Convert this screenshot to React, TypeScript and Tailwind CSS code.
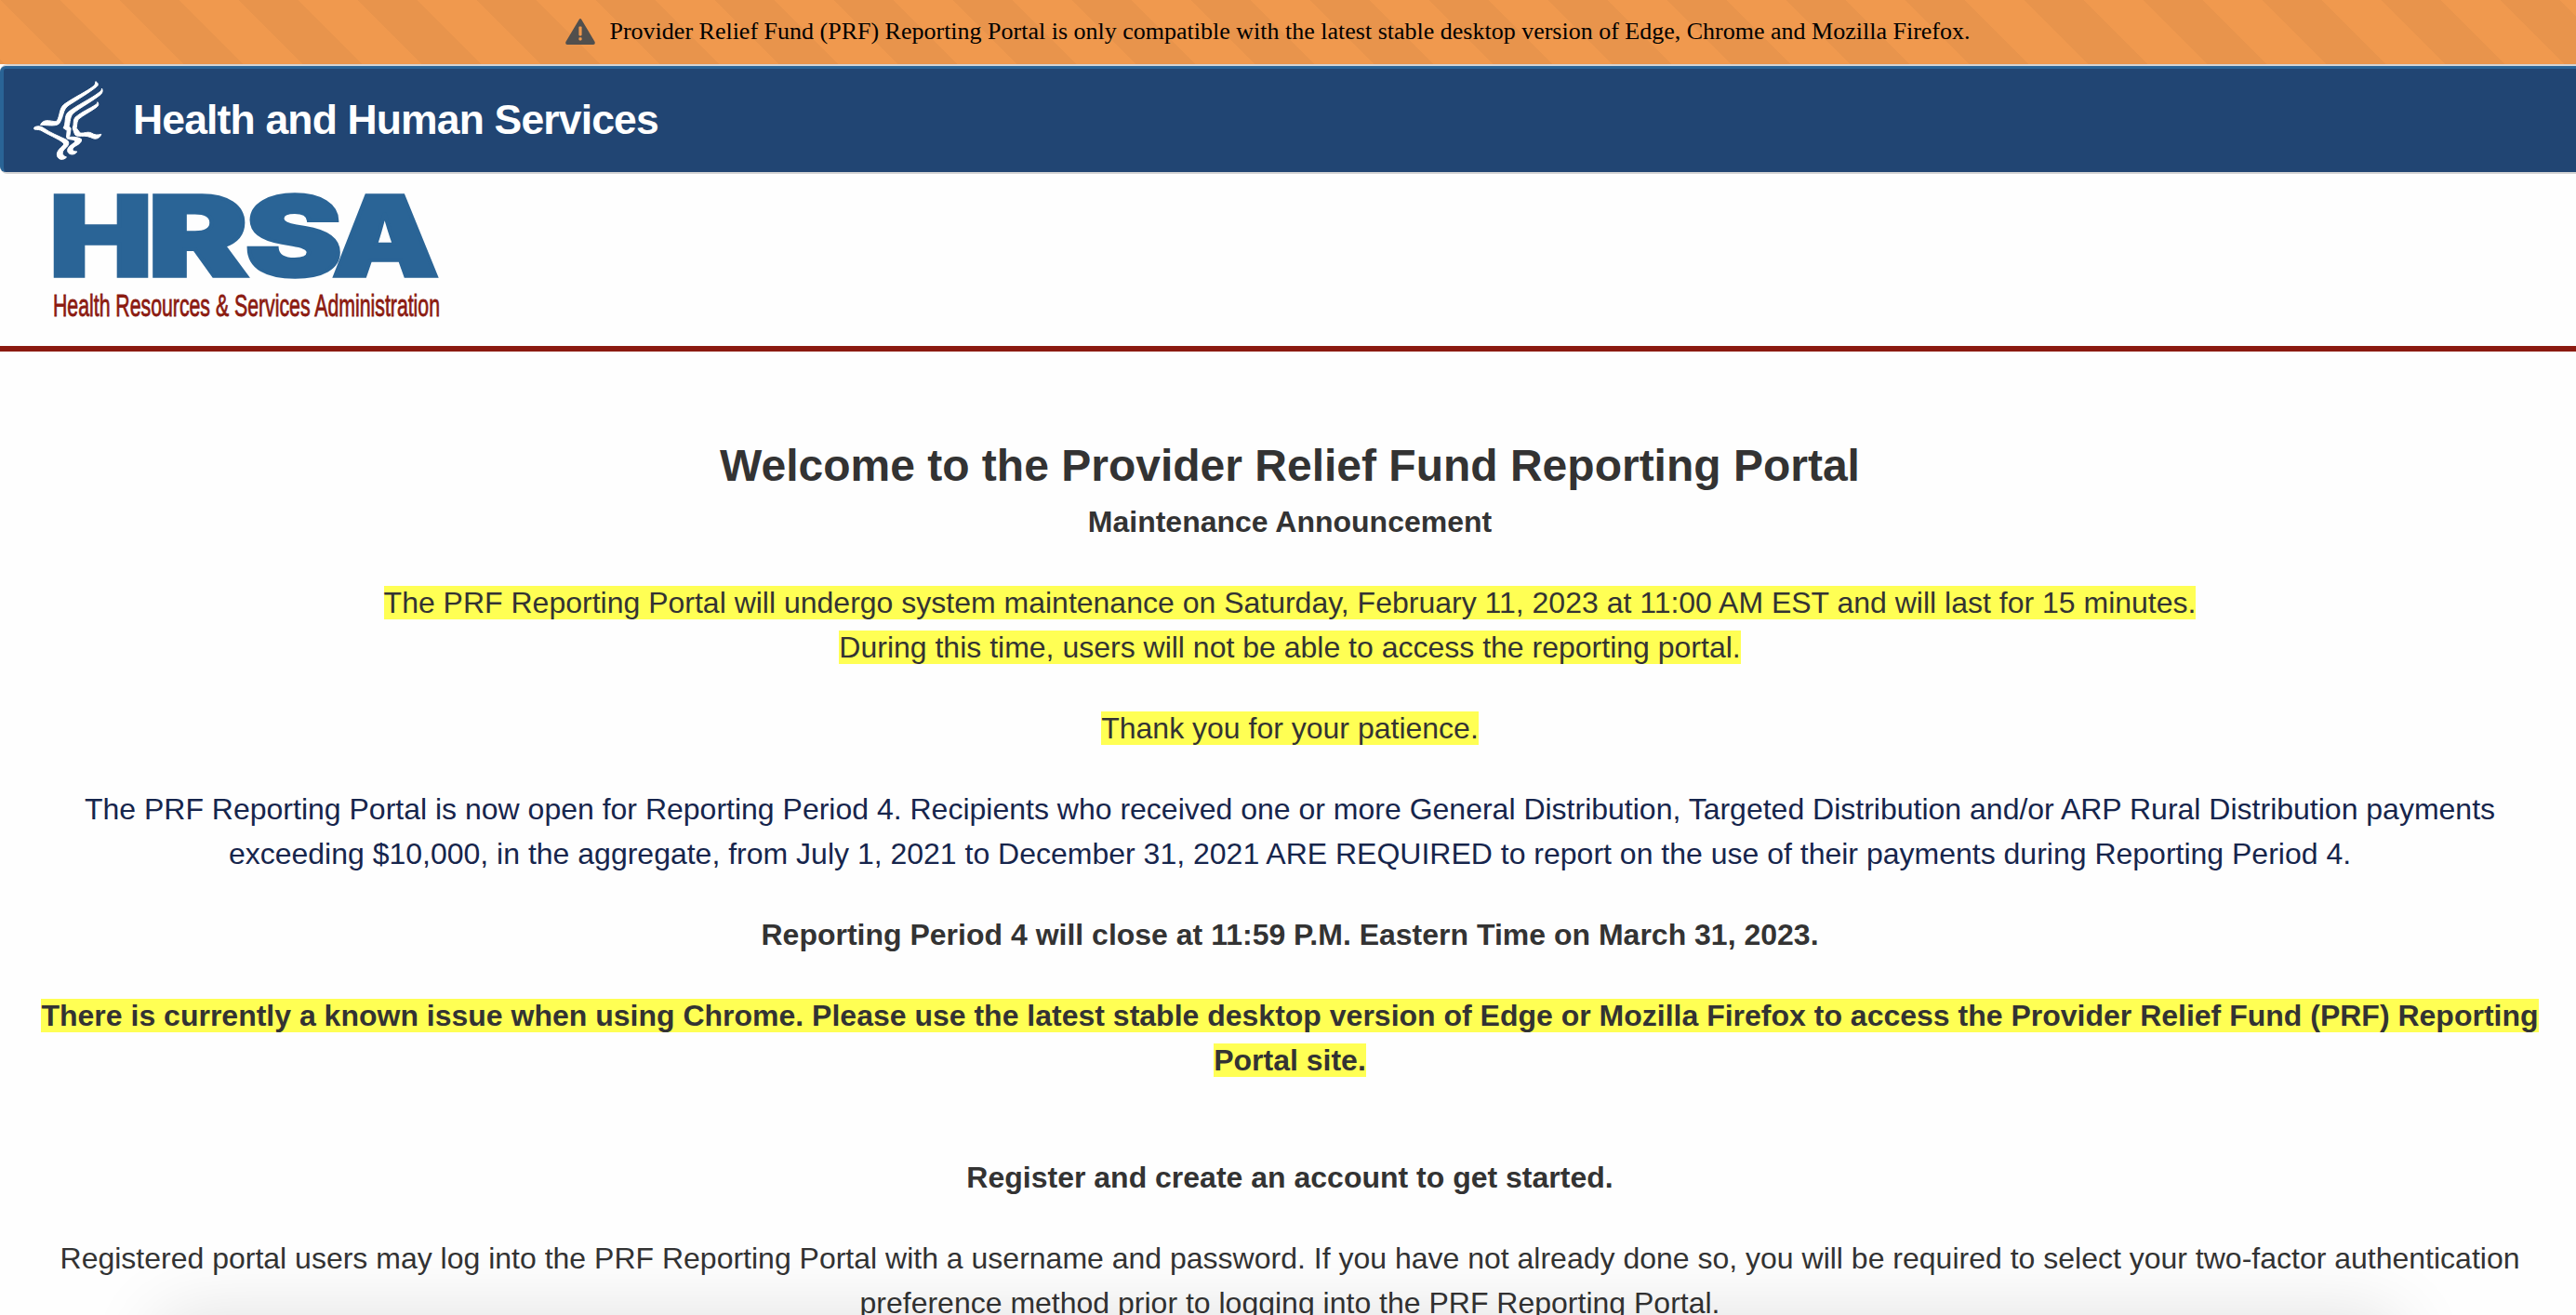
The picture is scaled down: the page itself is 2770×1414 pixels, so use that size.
import React from "react";

const hrsaLetters = [
  { ch: "H", x: 53, width: 111 },
  { ch: "R", x: 159, width: 108 },
  { ch: "S", x: 263.5, width: 104.5 },
  { ch: "A", x: 357, width: 115 },
];

function WarningIcon() {
  return (
    <svg viewBox="0 0 32 28" className="h-7 w-8 shrink-0" fill="#514f4d">
      <path
        fillRule="evenodd"
        d="M14.7 1 Q16 -0.8 17.3 1 L31.6 25 Q32.4 27.9 30 28 H2 Q-0.4 27.9 0.4 25 Z M14.4 9 V17.6 Q14.4 18.4 15.2 18.4 H16.8 Q17.6 18.4 17.6 17.6 V9 Q17.6 8.4 16.8 8.4 H15.2 Q14.4 8.4 14.4 9 Z M14.4 21 V22.6 Q14.4 23.4 15.2 23.4 H16.8 Q17.6 23.4 17.6 22.6 V21 Q17.6 20.2 16.8 20.2 H15.2 Q14.4 20.2 14.4 21 Z"
      />
    </svg>
  );
}

function EagleLogo() {
  return (
    <svg viewBox="108 80 224 258" className="h-[86px] w-[75px] shrink-0" fill="#fff" stroke="#fff" strokeWidth="3">
      <path d="M308 82 C316 86 318 93 312 98 C290 116 250 140 222 158 C200 172 206 196 190 218 C178 228 150 222 130 222 C134 212 142 208 152 208 C166 208 178 214 184 208 C194 190 190 170 206 156 C236 134 284 112 302 96 C306 92 308 88 308 82 Z" />
      <path d="M328 104 C332 112 330 118 324 124 C300 144 258 166 236 184 C224 196 226 214 222 226 L228 234 L224 258 L214 262 L216 240 L204 232 C214 214 206 196 218 182 C244 160 296 136 318 118 C324 114 328 110 328 104 Z" />
      <path d="M314 148 C319 154 317 160 312 164 C294 178 268 190 252 204 C246 216 248 226 246 232 L258 248 C272 250 282 242 294 248 C304 254 314 256 326 252 C322 264 312 268 302 266 C288 260 276 256 262 258 C250 258 242 258 240 250 L234 232 C240 218 234 208 242 198 C262 180 292 168 306 158 C312 154 314 152 314 148 Z" />
      <path d="M110 230 C120 224 132 226 140 232 C162 248 190 258 214 270 C224 276 222 286 214 294 C202 304 192 318 214 326 C206 336 188 336 184 322 C180 304 200 294 206 284 C204 274 160 256 136 242 C128 236 120 238 110 236 Z" />
      <path d="M216 262 C232 260 250 260 262 268 C264 280 250 286 240 292 C230 300 232 308 248 308 C242 320 222 320 218 308 C214 294 232 286 242 276 C240 268 226 270 216 266 Z" />
    </svg>
  );
}

function HrsaLogo() {
  return (
    <svg viewBox="58 200 416 150" className="ml-[58px] h-[150px] w-[416px] overflow-visible">
      <g fill="#2a6496" stroke="#2a6496" strokeWidth="3.5" className="font-['Inter'] font-black">
        {hrsaLetters.map((l) => (
          <text key={l.ch} x={l.x} y="297" fontSize="119" textLength={l.width} lengthAdjust="spacingAndGlyphs">
            {l.ch}
          </text>
        ))}
      </g>
      <text
        x="57"
        y="340"
        fontSize="33"
        fill="#8b1a10"
        stroke="#8b1a10"
        strokeWidth="0.8"
        textLength="416"
        lengthAdjust="spacingAndGlyphs"
        className="font-['Liberation_Sans']"
      >
        Health Resources &amp; Services Administration
      </text>
    </svg>
  );
}

function Mark({ children }: { children: React.ReactNode }) {
  return <span className="bg-[#ffff54]">{children}</span>;
}

export default function App() {
  return (
    <div className="relative h-[1414px] w-[2770px] overflow-hidden bg-[#fefefe] font-['Liberation_Sans',sans-serif]">
      <div className="flex h-[69px] items-center justify-center gap-4 bg-[#f0994e] bg-[linear-gradient(45deg,#e8944c_25%,transparent_25%,transparent_50%,#e8944c_50%,#e8944c_75%,transparent_75%)] bg-[length:128px_128px] pr-11 pb-px">
        <WarningIcon />
        <p className="font-['Liberation_Serif',serif] text-[26px] leading-9 whitespace-nowrap text-black">
          Provider Relief Fund (PRF) Reporting Portal is only compatible with the latest stable desktop version of Edge,
          Chrome and Mozilla Firefox.
        </p>
      </div>

      <header className="h-[118px] rounded-l-lg border-y-2 border-[#d4d4d4] bg-[#d4d4d4]">
        <div className="flex h-[114px] items-center rounded-l-md border-t-[3px] border-l-4 border-[#2a6496] bg-[#214573] pl-8">
          <EagleLogo />
          <span className="ml-8 text-[44.5px] font-bold tracking-[-0.85px] whitespace-nowrap text-white">
            Health and Human Services
          </span>
        </div>
      </header>

      <div className="h-[191px] border-b-6 border-[#8b1a10] pt-[13px]">
        <HrsaLogo />
      </div>

      <main className="flex flex-col items-center gap-[39px] pt-[87px] pl-1 text-center text-[32px] leading-[48px] text-[#333]">
        <div>
          <h1 className="text-[48px] leading-[72px] font-bold">Welcome to the Provider Relief Fund Reporting Portal</h1>
          <h2 className="font-bold">Maintenance Announcement</h2>
        </div>
        <p>
          <Mark>
            The PRF Reporting Portal will undergo system maintenance on Saturday, February 11, 2023 at 11:00 AM EST and
            will last for 15 minutes.
            <br />
            During this time, users will not be able to access the reporting portal.
          </Mark>
        </p>
        <p>
          <Mark>Thank you for your patience.</Mark>
        </p>
        <p className="text-[#16254c]">
          The PRF Reporting Portal is now open for Reporting Period 4. Recipients who received one or more General
          Distribution, Targeted Distribution and/or ARP Rural Distribution payments
          <br />
          exceeding $10,000, in the aggregate, from July 1, 2021 to December 31, 2021 ARE REQUIRED to report on the use
          of their payments during Reporting Period 4.
        </p>
        <p className="font-bold">Reporting Period 4 will close at 11:59 P.M. Eastern Time on March 31, 2023.</p>
        <p className="font-bold whitespace-nowrap">
          <Mark>
            There is currently a known issue when using Chrome. Please use the latest stable desktop version of Edge or
            Mozilla Firefox to access the Provider Relief Fund (PRF) Reporting
            <br />
            Portal site.
          </Mark>
        </p>
        <p className="mt-[39px] font-bold">Register and create an account to get started.</p>
        <p className="whitespace-nowrap">
          Registered portal users may log into the PRF Reporting Portal with a username and password. If you have not
          already done so, you will be required to select your two-factor authentication
          <br />
          preference method prior to logging into the PRF Reporting Portal.
        </p>
      </main>

      <div className="pointer-events-none absolute top-[1414px] right-[190px] left-[170px] h-40 rounded-3xl shadow-[0_0_80px_rgba(0,0,0,0.12)]" />
    </div>
  );
}
